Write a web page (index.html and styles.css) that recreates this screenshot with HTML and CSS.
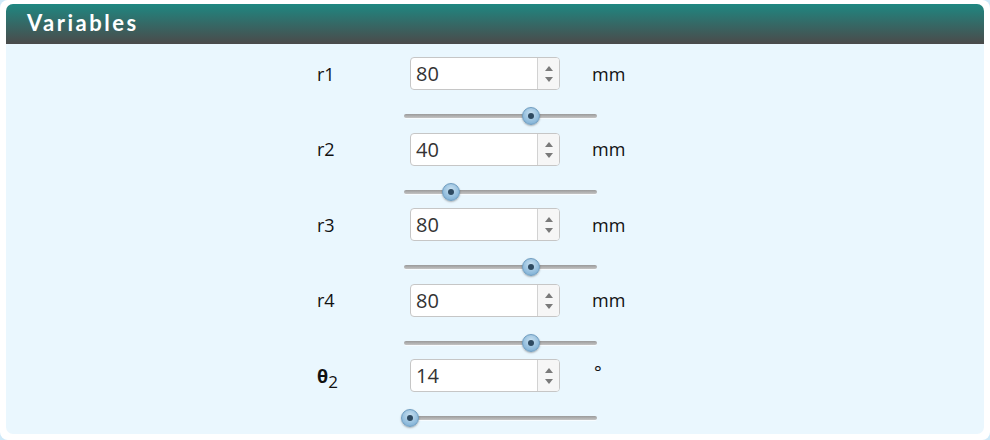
FILE: index.html
```html
<!DOCTYPE html>
<html lang="en">
<head>
  <meta charset="UTF-8">
  <title>Variables</title>
  <link rel="stylesheet" href="styles.css">
</head>
<body>
  <div class="frame">
    <div class="panel">
      <div class="panel-head">Variables</div>

      <div class="panel-body">
        <div class="vars">
          <!-- r1 -->
          <div class="var-label">r1</div>
          <div class="spin">
            <input class="spin-value" type="text" value="80">
            <span class="spin-btns"><span class="arrow up"></span><span class="arrow down"></span></span>
          </div>
          <div class="var-unit">mm</div>
          <div class="slider"><div class="track"></div><span class="handle" style="left: 65.8%"></span></div>

          <!-- r2 -->
          <div class="var-label">r2</div>
          <div class="spin">
            <input class="spin-value" type="text" value="40">
            <span class="spin-btns"><span class="arrow up"></span><span class="arrow down"></span></span>
          </div>
          <div class="var-unit">mm</div>
          <div class="slider"><div class="track"></div><span class="handle" style="left: 24.4%"></span></div>

          <!-- r3 -->
          <div class="var-label">r3</div>
          <div class="spin">
            <input class="spin-value" type="text" value="80">
            <span class="spin-btns"><span class="arrow up"></span><span class="arrow down"></span></span>
          </div>
          <div class="var-unit">mm</div>
          <div class="slider"><div class="track"></div><span class="handle" style="left: 65.8%"></span></div>

          <!-- r4 -->
          <div class="var-label">r4</div>
          <div class="spin">
            <input class="spin-value" type="text" value="80">
            <span class="spin-btns"><span class="arrow up"></span><span class="arrow down"></span></span>
          </div>
          <div class="var-unit">mm</div>
          <div class="slider"><div class="track"></div><span class="handle" style="left: 65.8%"></span></div>

          <!-- theta 2 -->
          <div class="var-label"><b>&theta;</b><sub>2</sub></div>
          <div class="spin">
            <input class="spin-value" type="text" value="14">
            <span class="spin-btns"><span class="arrow up"></span><span class="arrow down"></span></span>
          </div>
          <div class="var-unit deg">&deg;</div>
          <div class="slider"><div class="track"></div><span class="handle" style="left: 3%"></span></div>
        </div>
      </div>
    </div>
  </div>
</body>
</html>
```

FILE: styles.css
```css
/* Colores */
:root {
  --page: #cfe9f8;
  --body-bg: #eaf7fe;
  --head-top: #1f8781;
  --head-bottom: #4b4a4a;
  --border: #c6c6c6;
  --text: #111111;
}

* { margin: 0; padding: 0; box-sizing: border-box; }
body {
  background: var(--page);
  font-family: 'Open Sans', sans-serif;
  color: var(--text);
}

/* Marco blanco */
.frame {
  width: 990px;
  height: 440px;
  background: #fff;
  border-radius: 8px;
  padding: 4px 6px 6px 6px;
}
.panel {
  height: 100%;
  background: var(--body-bg);
  border-radius: 7px;
  overflow: hidden;
}
.panel-head {
  height: 40px;
  background: linear-gradient(var(--head-top), var(--head-bottom));
  color: #fff;
  font-family: 'Lato', sans-serif;
  font-weight: 700;
  font-size: 22px;
  letter-spacing: 2.5px;
  line-height: 38px;
  padding-left: 21px;
}

/* Variables */
.panel-body { padding-top: 13px; }
.vars {
  display: grid;
  grid-template-columns: 93px 150px 113px;
  justify-content: center;
  align-items: center;
}
.var-label { grid-column: 1; font-size: 18px; }
.var-label b { font-weight: 700; }
.var-label sub { font-size: 17px; vertical-align: -5px; line-height: 0; }
.var-unit { font-size: 18px; padding-left: 32px; }
.var-unit.deg { align-self: start; padding-top: 1px; padding-left: 34px; }

.spin {
  display: flex;
  height: 33px;
  border: 1px solid var(--border);
  border-radius: 4px;
  background: #fff;
  overflow: hidden;
}
.spin-value {
  flex: 1;
  min-width: 0;
  border: none;
  outline: none;
  background: transparent;
  font-family: 'Open Sans', sans-serif;
  font-size: 20px;
  color: #333;
  padding-left: 5px;
}
.spin-btns {
  width: 22px;
  border-left: 1px solid #d2d2d2;
  background: #f6f6f6;
  display: flex;
  flex-direction: column;
  justify-content: space-between;
  align-items: center;
  padding: 8px 0 7px;
}
.arrow {
  width: 0;
  height: 0;
  border-left: 4.5px solid transparent;
  border-right: 4.5px solid transparent;
}
.arrow.up { border-bottom: 5px solid #7a7a7a; }
.arrow.down { border-top: 5px solid #7a7a7a; }

/* Slider */
.slider {
  grid-column: 2;
  position: relative;
  width: 193px;
  height: 18px;
  margin: 17px 0 7.5px -6px;
}
.track {
  position: absolute;
  left: 0;
  right: 0;
  top: 7px;
  height: 4px;
  border-radius: 2px;
  background: linear-gradient(#9a9a9a, #c4c4c4);
  box-shadow: 0 1px 0 rgba(255,255,255,0.6);
}
.handle {
  position: absolute;
  top: 0;
  width: 18px;
  height: 18px;
  margin-left: -9px;
  border-radius: 50%;
  border: 1px solid #6f9dc0;
  background: radial-gradient(circle at 50% 35%, #c9e1f1, #8ab8da 70%, #6f9fc5);
  box-shadow: 0 1px 2px rgba(0,0,0,0.3);
}
.handle::after {
  content: '';
  position: absolute;
  left: 5px;
  top: 5px;
  width: 6px;
  height: 6px;
  border-radius: 50%;
  background: #2e4a61;
}
```
